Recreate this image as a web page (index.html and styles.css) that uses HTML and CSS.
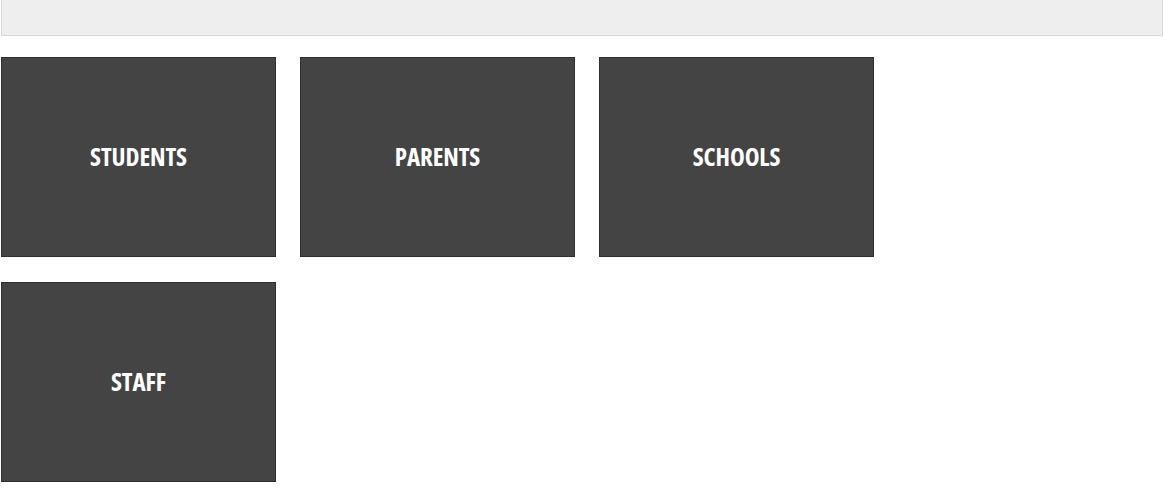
FILE: index.html
```html
<!DOCTYPE html>
<html>
<head>
<meta charset="utf-8">
<link rel="stylesheet" href="styles.css">
</head>
<body>
<div class="topbar"></div>
<div class="tiles">
  <a class="tile"><span>STUDENTS</span></a>
  <a class="tile"><span>PARENTS</span></a>
  <a class="tile"><span>SCHOOLS</span></a>
  <a class="tile"><span>STAFF</span></a>
</div>
</body>
</html>
```
FILE: styles.css
```css
html, body {
  margin: 0;
  padding: 0;
  background: #fff;
}
body {
  font-family: "Open Sans", "Liberation Sans", sans-serif;
}
.topbar {
  height: 35px;
  margin: 0 1px 0 1px;
  background: #eeeeee;
  border: 1px solid #d6d6d6;
  border-top: none;
}
.tiles {
  display: grid;
  grid-template-columns: repeat(3, 275px);
  column-gap: 24px;
  row-gap: 25px;
  padding: 21px 0 0 1px;
}
.tile {
  box-sizing: border-box;
  height: 200px;
  padding-bottom: 2px;
  background: #444444;
  border: 1px solid #2e2e2e;
  display: flex;
  align-items: center;
  justify-content: center;
  color: #fff;
  text-decoration: none;
}
.tile span {
  font-size: 25px;
  font-weight: 700;
  font-stretch: condensed;
  letter-spacing: -0.1px;
  line-height: 1;
}
```
